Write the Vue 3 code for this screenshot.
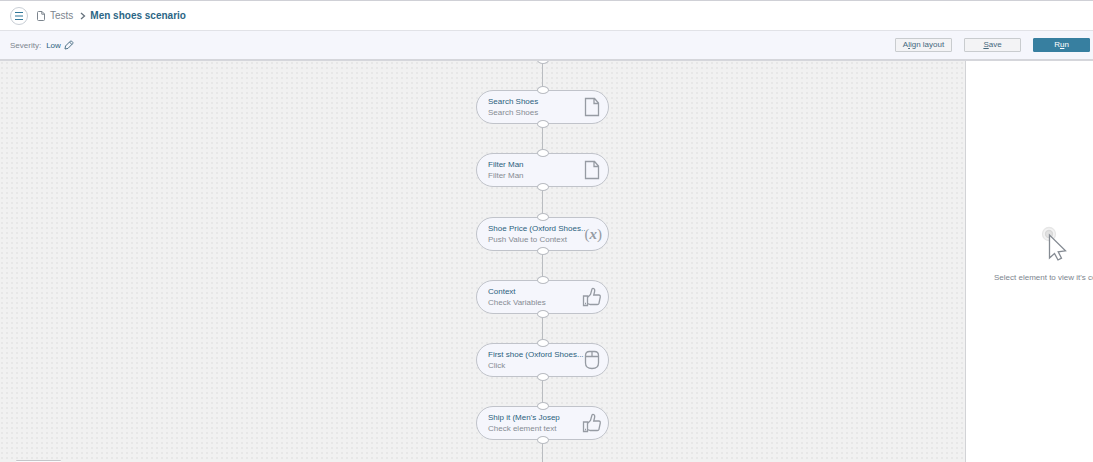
<script setup>
const nodes = [
  { y: 29, title: 'Search Shoes', kind: 'Search Shoes', icon: 'page' },
  { y: 92, title: 'Filter Man', kind: 'Filter Man', icon: 'page' },
  { y: 156, title: 'Shoe Price (Oxford Shoes..', kind: 'Push Value to Context', icon: 'variable' },
  { y: 219, title: 'Context', kind: 'Check Variables', icon: 'thumb' },
  { y: 282, title: 'First shoe (Oxford Shoes...', kind: 'Click', icon: 'mouse' },
  { y: 345, title: "Ship it (Men's Josep", kind: 'Check element text', icon: 'thumb' },
]
</script>

<template>
  <div class="app">
    <header class="top">
      <button class="menu" aria-label="Menu">
        <svg width="10" height="10" viewBox="0 0 10 10"><path d="M1 1.500h8M1 5h8M1 8.500h8" /></svg>
      </button>
      <nav class="crumbs">
        <a class="tests" href="#">
          <svg width="8" height="10" viewBox="0 0 8 10"><path d="M1.500.5h3.500l2.500 2.500v5.500q0 1-1 1h-5q-1 0-1-1v-7q0-1 1-1zM4.800.5v2.700h2.700" /></svg>
          Tests
        </a>
        <svg class="chevron" width="6" height="8" viewBox="0 0 6 8"><path d="M1 1l3.500 3-3.500 3" /></svg>
        <h1>Men shoes scenario</h1>
      </nav>
    </header>

    <div class="toolbar">
      <span class="label">Severity:</span>
      <span class="value">Low</span>
      <button class="edit" aria-label="Edit severity">
        <svg width="10" height="10" viewBox="0 0 10 10"><path d="M1 9l.5-3 4.800-4.800q.7-.6 1.400 0l1 1q.6.7 0 1.400l-4.700 4.800zM5.500 2l2.400 2.500" /></svg>
      </button>
      <div class="actions">
        <button class="btn">A<u>l</u>ign layout</button>
        <button class="btn"><u>S</u>ave</button>
        <button class="btn primary">R<u>u</u>n</button>
      </div>
    </div>

    <div class="body">
      <main class="canvas">
        <span class="wire"></span>
        <span class="port first"></span>
        <span class="above"></span>
        <article v-for="n in nodes" :key="n.y" class="node" :style="{ top: n.y + 'px' }">
          <span class="port in"></span>
          <div class="text">
            <div class="title">{{ n.title }}</div>
            <div class="kind">{{ n.kind }}</div>
          </div>
          <svg v-if="n.icon === 'page'" class="icon" width="20" height="20" viewBox="0 0 20 20">
            <path d="M3.500 1.500h9l4 4.500v12.500h-13zM12 1.500v5h4.500" />
          </svg>
          <span v-else-if="n.icon === 'variable'" class="icon var">(<i>x</i>)</span>
          <svg v-else-if="n.icon === 'thumb'" class="icon" width="20" height="20" viewBox="0 0 20 20">
            <path d="M1.500 9h4v9.500h-4zM3 16.500h1M5.500 10.500l3-3 1.500-5.500q.5-1 1.700-.5 1.500.8.8 3.500l-.8 3h5.300q1.500.3 1.300 1.800l-1.300 6.400q-.4 1.300-1.700 1.300h-7l-2.800-1" />
          </svg>
          <svg v-else class="icon" width="20" height="20" viewBox="0 0 20 20">
            <path d="M3.500 5.500q0-4 4-4h5q4 0 4 4v7.500q0 5.500-6.500 5.500t-6.500-5.500zM3.500 6.500h13M10 1.500v5" />
          </svg>
          <span class="port out"></span>
        </article>
        <span class="below"></span>
      </main>
      <aside class="panel">
        <svg class="pointer" width="28" height="36" viewBox="0 0 28 36">
          <circle class="halo" cx="8" cy="8" r="6.500" />
          <circle class="spot" cx="8" cy="8" r="3.500" />
          <path d="M8.500 9v23l5-4.500 3.500 6.500 3.500-1.800-3.300-6.400 7.300-1z" />
        </svg>
        <p>Select element to view it's configuration</p>
      </aside>
    </div>
  </div>
</template>

<style>
body { background: #fff; }
</style>

<style scoped>
* { box-sizing: border-box; }
.app {
  display: flex;
  flex-direction: column;
  height: 100vh;
  overflow: hidden;
  font-family: "Liberation Sans", Arial, sans-serif;
  color: #7c858e;
}
svg { fill: none; stroke: currentColor; stroke-width: 1; display: block; }
button { font: inherit; padding: 0; margin: 0; }
.top {
  display: flex;
  align-items: center;
  flex: none;
  height: 30px;
  padding-left: 10px;
  gap: 9px;
  border-top: 1px solid #cfd0d6;
  background: #fff;
}
.menu {
  display: grid;
  place-items: center;
  width: 18px;
  height: 18px;
  border: 1px solid #c9cfd6;
  border-radius: 50%;
  background: #fff;
  color: #2f7799;
}
.crumbs { display: flex; align-items: center; font-size: 10px; }
.tests { display: flex; align-items: center; gap: 5px; color: #7c858e; text-decoration: none; }
.chevron { margin: 0 4px 0 7px; color: #66727d; stroke-width: 1.300; }
h1 { margin: 0; font-size: 10px; font-weight: bold; color: #2b6685; }
.toolbar {
  display: flex;
  align-items: center;
  flex: none;
  height: 31px;
  padding: 0 3px 0 10px;
  border-top: 1px solid #e1e2e7;
  border-bottom: 2px solid #d5d6db;
  background: #f5f6fc;
  font-size: 8px;
}
.value { margin-left: 5px; color: #2b5f7c; }
.edit { margin-left: 3px; border: 0; background: none; color: #4f7388; }
.actions { display: flex; gap: 12px; margin-left: auto; }
.btn {
  width: 57px;
  height: 14px;
  border: 1px solid #c9cccf;
  border-radius: 1px;
  background: #f3f3f5;
  color: #45687d;
  line-height: 12px;
}
.primary { border-color: #377fa0; background: #377fa0; color: #fff; }
.body { display: flex; flex: 1; min-height: 0; }
.canvas {
  position: relative;
  flex: 1;
  overflow: hidden;
  background: radial-gradient(circle at 2px 2px, #e7e7e7 1px, transparent 1px) 0 0 / 5px 5px #f1f1f1;
}
.wire { position: absolute; left: 542px; top: 0; bottom: 0; width: 1px; background: #b9bcc0; }
.above { position: absolute; left: 492px; top: -1px; width: 101px; border-top: 1px dashed #a8abb1; }
.below { position: absolute; left: 16px; bottom: 0; width: 45px; height: 2px; border-top: 1px solid #c4c5c9; border-radius: 4px; background: #fafafc; }
.node {
  position: absolute;
  left: 476px;
  display: flex;
  align-items: center;
  justify-content: space-between;
  width: 133px;
  height: 34px;
  padding: 0 6px 0 11px;
  border: 1px solid #c0c3ca;
  border-radius: 17px;
  background: #f5f6fc;
}
.port {
  position: absolute;
  left: 60px;
  width: 12px;
  height: 8px;
  border: 1px solid #b9bcc2;
  border-radius: 50%;
  background: #fff;
}
.first { left: 537px; top: -5px; }
.in { top: -5px; }
.out { bottom: -5px; }
.text { width: 93px; flex: none; font-size: 8px; line-height: 11px; white-space: nowrap; }
.title { color: #2b5f7c; }
.kind { color: #858b93; }
.icon { flex: none; color: #969ba3; stroke-width: 1.300; }
.var { font: 15px/20px "Liberation Serif", serif; white-space: nowrap; }
.var i { font-weight: bold; }
.panel {
  flex: none;
  width: 128px;
  padding: 165px 0 0 28px;
  overflow: hidden;
  border-left: 1px solid #d2d3d6;
  background: #fff;
}
.pointer { margin-left: 47px; color: #858b93; stroke-width: 1.300; }
.pointer path { fill: #fff; }
.pointer .halo { fill: #f3f3f3; stroke: #e6e6e6; }
.pointer .spot { fill: #e2e2e2; stroke: #d8d8d8; }
.panel p { margin: 10px 0 0; font-size: 8px; line-height: 11px; white-space: nowrap; }
</style>
